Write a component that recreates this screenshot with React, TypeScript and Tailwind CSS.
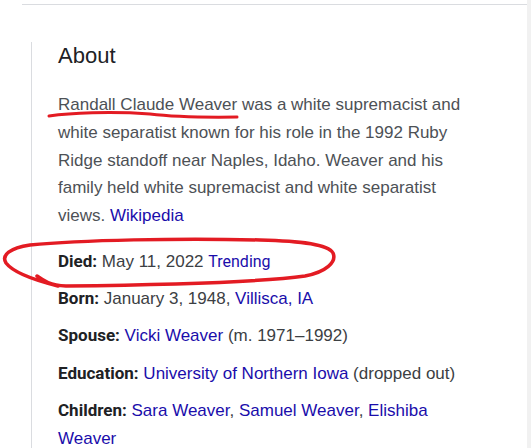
import React from 'react';

const rows = [
  { label: 'Died:', parts: [{ t: 'May 11, 2022 ' }], trending: true },
  { label: 'Born:', parts: [{ t: 'January 3, 1948, ' }, { t: 'Villisca, IA', link: true }] },
  { label: 'Spouse:', parts: [{ t: 'Vicki Weaver', link: true }, { t: ' (m. 1971–1992)' }] },
  { label: 'Education:', parts: [{ t: 'University of Northern Iowa', link: true }, { t: ' (dropped out)' }] },
  {
    label: 'Children:',
    parts: [
      { t: 'Sara Weaver', link: true },
      { t: ', ' },
      { t: 'Samuel Weaver', link: true },
      { t: ', ' },
      { t: 'Elishiba Weaver', link: true },
    ],
  },
];

function Annotations() {
  return (
    <svg
      className="pointer-events-none absolute left-0 top-0"
      width={531}
      height={448}
      viewBox="0 0 531 448"
      fill="none"
    >
      {/* underline under the name */}
      <path
        d="M49 116 C 70 113, 110 111, 150 114 C 166 116, 200 117.5, 237 117"
        stroke="#e31b23"
        strokeWidth={3}
        strokeLinecap="round"
      />
      {/* loop round the Died row */}
      <path
        d="M37 276 C 44 281, 50 285, 66 286 C 150 285, 255 283, 305 276 C 326 272, 337 262, 333 253 C 328 244, 300 241, 260 240 C 180 238, 80 240, 30 245 C 10 248, 1 255, 6 263 C 12 271, 30 279, 58 286"
        stroke="#e31b23"
        strokeWidth={3.5}
        strokeLinecap="round"
        strokeLinejoin="round"
      />
    </svg>
  );
}

export default function App() {
  return (
    <div className="relative flex h-[448px] w-[531px] overflow-hidden bg-white font-['Liberation_Sans',Arial,sans-serif]">
      <div className="flex-1">
        <div className="ml-[22px] mt-[4px] border-t border-[#dadce0]" />
        <div className="ml-[31px] mt-[37px] border-l border-[#dadce0] pl-[26px] pb-10">
          <h2 className="text-[22px] leading-[28px] text-[#202124]">About</h2>
          <div className="mt-[21px] w-[422px]">
            <p className="text-[17px] leading-[27.75px] text-[#4d5156]">
              Randall Claude Weaver was a white supremacist and white separatist known for his role in the 1992 Ruby
              Ridge standoff near Naples, Idaho. Weaver and his family held white supremacist and white separatist
              views. <a className="text-[#1a0dab] no-underline">Wikipedia</a>
            </p>
            <div className="mt-[18px] flex flex-col gap-[9.5px]">
              {rows.map((r) => (
                <div key={r.label} className="text-[17px] leading-[27.75px] text-[#3c4043]">
                  <span className="font-['Roboto',sans-serif] font-bold text-[#202124]">{r.label}</span>{' '}
                  {r.parts.map((p, i) =>
                    p.link ? (
                      <a key={i} className="text-[#1a0dab] no-underline">
                        {p.t}
                      </a>
                    ) : (
                      <span key={i}>{p.t}</span>
                    )
                  )}
                  {r.trending && (
                    <a className="font-['Roboto',sans-serif] text-[16px] text-[#1a0dab] no-underline">Trending</a>
                  )}
                </div>
              ))}
            </div>
          </div>
        </div>
      </div>
      <div className="h-full w-[4px] bg-[#f1f1f1]" />
      <Annotations />
    </div>
  );
}
